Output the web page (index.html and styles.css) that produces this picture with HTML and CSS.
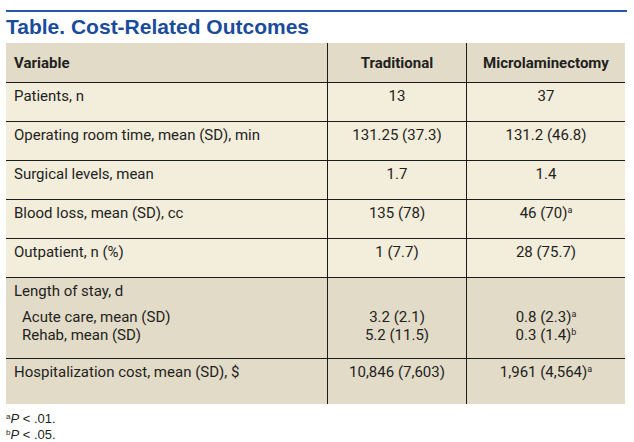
FILE: index.html
```html
<!DOCTYPE html>
<html lang="en">
<head>
<meta charset="utf-8">
<title>Table. Cost-Related Outcomes</title>
<link rel="stylesheet" href="styles.css">
</head>
<body>
<div class="page">
  <div class="rule"></div>
  <h1 class="title">Table. Cost-Related Outcomes</h1>
  <div class="tbl">
    <div class="c head first">Variable</div>
    <div class="c head num">Traditional</div>
    <div class="c head num last">Microlaminectomy</div>

    <div class="c first">Patients, n</div>
    <div class="c num">13</div>
    <div class="c num last">37</div>

    <div class="c first">Operating room time, mean (SD), min</div>
    <div class="c num">131.25 (37.3)</div>
    <div class="c num last">131.2 (46.8)</div>

    <div class="c first">Surgical levels, mean</div>
    <div class="c num">1.7</div>
    <div class="c num last">1.4</div>

    <div class="c first">Blood loss, mean (SD), cc</div>
    <div class="c num">135 (78)</div>
    <div class="c num last">46 (70)<sup>a</sup></div>

    <div class="c first">Outpatient, n (%)</div>
    <div class="c num">1 (7.7)</div>
    <div class="c num last">28 (75.7)</div>

    <div class="c dark first">
      <div class="lead">Length of stay, d</div>
      <div class="sub">
        <div class="ind">Acute care, mean (SD)</div>
        <div class="ind">Rehab, mean (SD)</div>
      </div>
    </div>
    <div class="c dark num stay">
      <div class="sub"><div>3.2 (2.1)</div><div>5.2 (11.5)</div></div>
    </div>
    <div class="c dark num last stay">
      <div class="sub"><div>0.8 (2.3)<sup>a</sup></div><div>0.3 (1.4)<sup>b</sup></div></div>
    </div>

    <div class="c dark first end">Hospitalization cost, mean (SD), $</div>
    <div class="c dark num end">10,846 (7,603)</div>
    <div class="c dark num last end">1,961 (4,564)<sup>a</sup></div>
  </div>
  <div class="notes">
    <div><sup>a</sup><i>P</i> &lt; .01.</div>
    <div><sup>b</sup><i>P</i> &lt; .05.</div>
  </div>
</div>
</body>
</html>
```

FILE: styles.css
```css
html, body {
  margin: 0;
  padding: 0;
  background: #ffffff;
}

.page {
  padding: 10px 0 0 6px;
  width: 621px;
  color: #231f20;
}

.rule {
  height: 2px;
  background: #2457a6;
}

.title {
  margin: 3px 0 4px 0;
  font-family: "Liberation Sans", Arial, sans-serif;
  font-weight: bold;
  font-size: 21px;
  line-height: 24px;
  color: #1a4c9c;
}

.tbl {
  display: grid;
  grid-template-columns: 322px 139px 158px;
  grid-template-rows: 40px 39px 39px 39px 39px 39px 81px 45px;
  font-family: Roboto, "Liberation Sans", sans-serif;
  font-size: 15px;
  line-height: 16px;
}

.c {
  box-sizing: border-box;
  background: #f3eddc;
  border-bottom: 1px solid #1c1a1a;
  border-right: 1px solid #1c1a1a;
  padding: 5px 8px 0 8px;
}

.c.last {
  border-right: none;
}

.c.end {
  border-bottom: none;
}

.c.num {
  text-align: center;
  padding-left: 2px;
  padding-right: 2px;
}

.c.head {
  background: #e2dbc8;
  font-weight: bold;
  padding-top: 0;
  display: flex;
  align-items: center;
}

.c.head.num {
  justify-content: center;
}

.c.dark {
  background: #e2dbc8;
}

.sub {
  margin-top: 9px;
  line-height: 18px;
}

.c.stay .sub {
  margin-top: 25px;
}

.ind {
  padding-left: 8px;
}

sup {
  font-size: 9px;
  line-height: 0;
  vertical-align: 5px;
}

.notes {
  margin-top: 7px;
  font-family: "Liberation Sans", Arial, sans-serif;
  font-size: 13px;
  line-height: 16px;
}

.notes sup {
  font-size: 8px;
  vertical-align: 4px;
}
```
